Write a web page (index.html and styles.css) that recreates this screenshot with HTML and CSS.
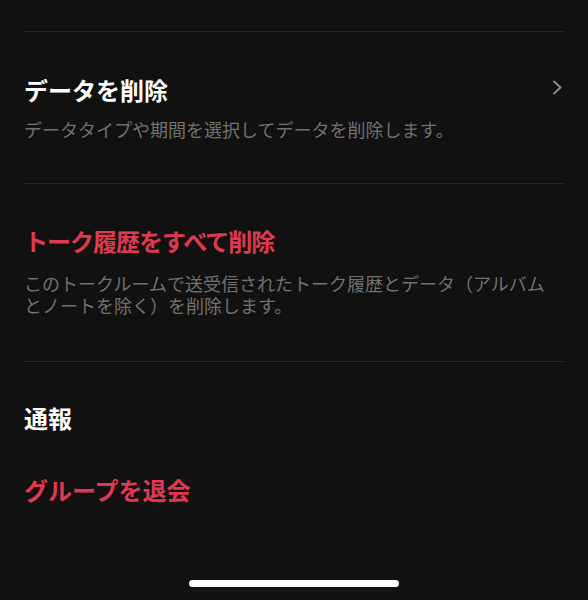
FILE: index.html
```html
<!DOCTYPE html>
<html lang="ja">
<head>
<meta charset="utf-8">
<link rel="stylesheet" href="styles.css">
</head>
<body>
<div class="page">
  <div class="divider"></div>
  <div class="section s1">
    <div class="row">
      <div class="title">データを削除</div>
      <svg class="chev" width="11" height="15" viewBox="0 0 11 15"><polyline points="2,1.5 8.5,7.5 2,13.5" fill="none" stroke="#8a8a8a" stroke-width="2" stroke-linecap="round" stroke-linejoin="round"/></svg>
    </div>
    <div class="desc">データタイプや期間を選択してデータを削除します。</div>
  </div>
  <div class="divider"></div>
  <div class="section s2">
    <div class="title red tight">トーク履歴をすべて削除</div>
    <div class="desc wrap">このトークルームで送受信されたトーク履歴とデータ（アルバムとノートを除く）を削除します。</div>
  </div>
  <div class="divider"></div>
  <div class="section s3">
    <div class="title">通報</div>
    <div class="title red">グループを退会</div>
  </div>
</div>
<div class="home"></div>
</body>
</html>
```
FILE: styles.css
```css
html, body {
  margin: 0;
  padding: 0;
  background: #111111;
  width: 588px;
  height: 600px;
  overflow: hidden;
  font-family: "Noto Sans CJK JP", "Noto Sans", sans-serif;
}
.page {
  padding: 31px 24px 0 24px;
}
.divider {
  height: 1px;
  background: #262626;
}
.section {
  display: flex;
  flex-direction: column;
}
.s1 {
  padding: 43px 0 43px;
  gap: 13px;
}
.s2 {
  padding: 42px 0 45px;
  gap: 16px;
}
.s3 {
  padding: 41px 0 0;
  gap: 42px;
}
.row {
  display: flex;
  justify-content: space-between;
  align-items: center;
}
.chev {
  margin-right: 1px;
  margin-top: -5px;
}
.title {
  font-size: 24px;
  line-height: 30px;
  font-weight: 700;
  color: #ffffff;
}
.red {
  color: #e0394f;
}
.tight {
  letter-spacing: -1px;
}
.desc {
  font-size: 18px;
  line-height: 22px;
  color: #707070;
}
.wrap {
  padding-right: 16px;
}
.home {
  position: fixed;
  left: 189px;
  bottom: 13px;
  width: 210px;
  height: 7px;
  border-radius: 4px;
  background: #ffffff;
}
```
